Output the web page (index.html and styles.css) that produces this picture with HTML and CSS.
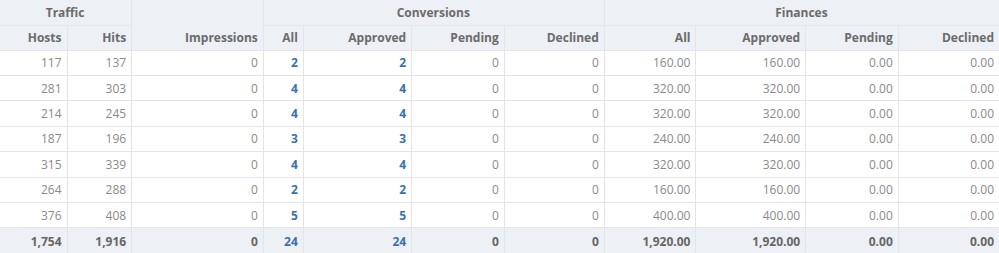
FILE: index.html
```html
<!DOCTYPE html>
<html>
<head>
<meta charset="utf-8">
<link rel="stylesheet" href="styles.css">
</head>
<body>
<table class="stats">
  <colgroup>
    <col style="width:67px"><col style="width:64.7px"><col style="width:131.6px"><col style="width:40px"><col style="width:108.4px"><col style="width:92.6px"><col style="width:100px"><col style="width:91.7px"><col style="width:109.7px"><col style="width:92.6px"><col style="width:100.7px">
  </colgroup>
  <thead>
    <tr class="group-row">
      <th colspan="2" class="group">Traffic</th>
      <th rowspan="2" class="bottom">Impressions</th>
      <th colspan="4" class="group">Conversions</th>
      <th colspan="4" class="group">Finances</th>
    </tr>
    <tr class="sub-row">
      <th>Hosts</th><th>Hits</th>
      <th>All</th><th>Approved</th><th>Pending</th><th>Declined</th>
      <th>All</th><th>Approved</th><th>Pending</th><th>Declined</th>
    </tr>
  </thead>
  <tbody>
    <tr><td>117</td><td>137</td><td>0</td><td class="link">2</td><td class="link">2</td><td>0</td><td>0</td><td>160.00</td><td>160.00</td><td>0.00</td><td>0.00</td></tr>
    <tr><td>281</td><td>303</td><td>0</td><td class="link">4</td><td class="link">4</td><td>0</td><td>0</td><td>320.00</td><td>320.00</td><td>0.00</td><td>0.00</td></tr>
    <tr><td>214</td><td>245</td><td>0</td><td class="link">4</td><td class="link">4</td><td>0</td><td>0</td><td>320.00</td><td>320.00</td><td>0.00</td><td>0.00</td></tr>
    <tr><td>187</td><td>196</td><td>0</td><td class="link">3</td><td class="link">3</td><td>0</td><td>0</td><td>240.00</td><td>240.00</td><td>0.00</td><td>0.00</td></tr>
    <tr><td>315</td><td>339</td><td>0</td><td class="link">4</td><td class="link">4</td><td>0</td><td>0</td><td>320.00</td><td>320.00</td><td>0.00</td><td>0.00</td></tr>
    <tr><td>264</td><td>288</td><td>0</td><td class="link">2</td><td class="link">2</td><td>0</td><td>0</td><td>160.00</td><td>160.00</td><td>0.00</td><td>0.00</td></tr>
    <tr><td>376</td><td>408</td><td>0</td><td class="link">5</td><td class="link">5</td><td>0</td><td>0</td><td>400.00</td><td>400.00</td><td>0.00</td><td>0.00</td></tr>
  </tbody>
  <tfoot>
    <tr><td>1,754</td><td>1,916</td><td>0</td><td class="link">24</td><td class="link">24</td><td>0</td><td>0</td><td>1,920.00</td><td>1,920.00</td><td>0.00</td><td>0.00</td></tr>
  </tfoot>
</table>
</body>
</html>
```
FILE: styles.css
```css
html, body {
  margin: 0;
  padding: 0;
  background: #ffffff;
}
.stats {
  width: 999px;
  table-layout: fixed;
  border-collapse: collapse;
  font-family: "Open Sans", "Liberation Sans", sans-serif;
  font-size: 12px;
  color: #8a8a8a;
}
.stats th, .stats td {
  border: 1px solid #e3e5e8;
  padding: 0 5px 0 4px;
  text-align: right;
  vertical-align: middle;
  white-space: nowrap;
  overflow: hidden;
}
.stats tr > :first-child { border-left: none; }
.stats tr > :last-child { border-right: none; }
.stats thead tr:first-child th { border-top: none; }
.stats th {
  background: #edf0f4;
  color: #6b6b6b;
  font-weight: 700;
}
.stats th.group {
  text-align: center;
}
.stats th.bottom {
  vertical-align: bottom;
  padding-bottom: 4px;
}
.stats thead tr { height: 25px; }
.stats tbody tr { height: 25.43px; }
.stats tfoot tr { height: 26px; }
.stats tfoot td {
  background: #edf0f4;
  color: #666666;
  font-weight: 700;
  border-bottom: none;
}
.stats td.link {
  color: #3a72ad;
  font-weight: 700;
}
```
